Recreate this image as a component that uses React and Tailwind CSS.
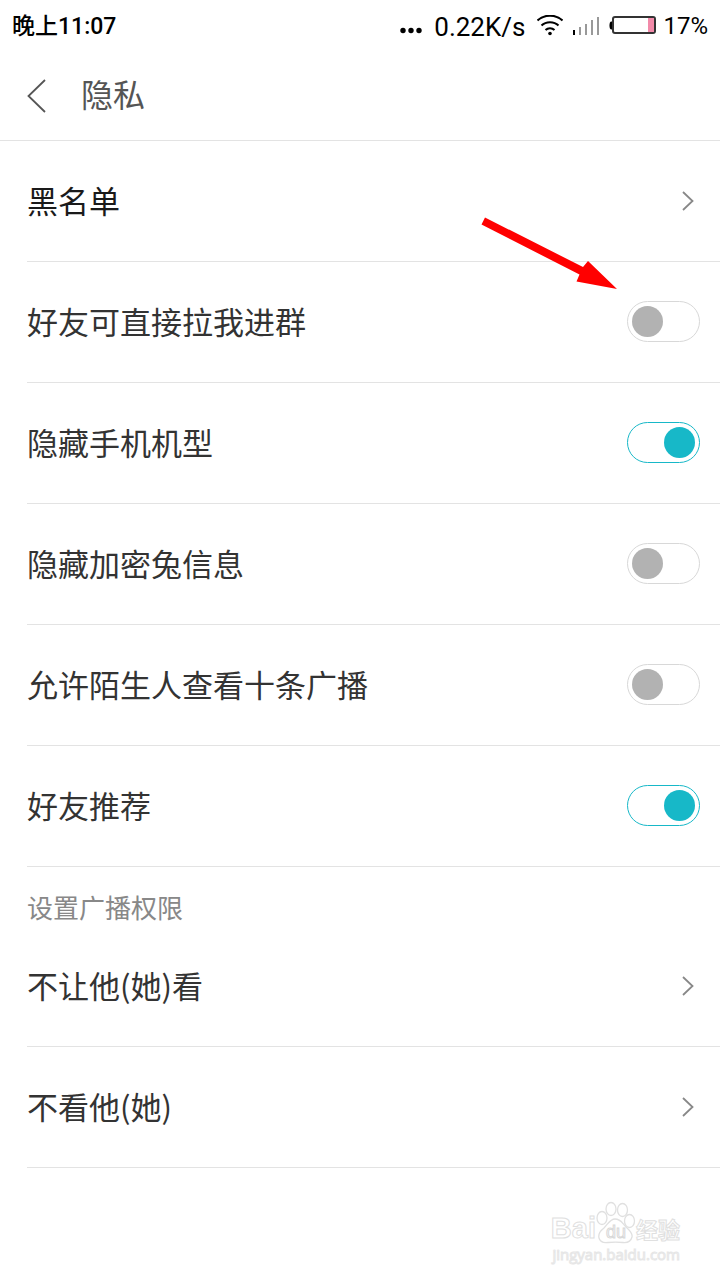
import React, { useState } from 'react';

const StatusBar = () => (
  <div className="flex h-[52px] items-center justify-between px-3 text-black">
    <span className="pt-0.5 font-['Roboto','Noto_Sans_CJK_SC',sans-serif] text-[23px] leading-8 font-medium">晚上11:07</span>
    <div className="flex items-center">
      <svg className="mr-3 mt-2 h-2 w-[22px]" viewBox="0 0 22 8" aria-hidden="true">
        <circle cx="3" cy="4.500" r="2.700" />
        <circle cx="11" cy="4.500" r="2.700" />
        <circle cx="19" cy="4.500" r="2.700" />
      </svg>
      <span className="pt-0.5 font-['Roboto','Liberation_Sans',sans-serif] text-[26px] leading-8">0.22K/s</span>
      <svg className="ml-3 h-[22px] w-[26px]" viewBox="0 0 26 22" fill="none" stroke="#000" strokeWidth="2" aria-hidden="true">
        <path d="M0.5 5.5C7 -1 19 -1 25.5 5.5" />
        <path d="M4.500 10.500C9 6 17 6 21.500 10.500" />
        <path d="M8.500 15C11 12.500 15 12.500 17.500 15" />
        <circle cx="13" cy="18.500" r="1.800" fill="#000" stroke="none" />
      </svg>
      <svg className="ml-[10px] h-5 w-[26px]" viewBox="0 0 26 20" aria-hidden="true">
        <path d="M0 14h2v5H0z" fill="#000" />
        <path d="M6 11h2v8H6zM12 8h2v11h-2zM18 4h2v15h-2zM24 1h2v18h-2z" fill="#999" />
      </svg>
      <svg className="ml-[10px] h-5 w-12" viewBox="0 0 48 20" aria-hidden="true">
        <path d="M4 5.500H2.500C1 5.500 0.500 7 0.500 9.500S1 13.500 2.500 13.500H4z" fill="#000" />
        <rect x="4" y="1" width="42" height="16" rx="2" fill="#fff" stroke="#333" strokeWidth="2" />
        <path d="M39 2h6v14h-6z" fill="#f28aa9" />
      </svg>
      <span className="ml-[6px] font-['Roboto','Liberation_Sans',sans-serif] text-[24px] leading-8">17%</span>
    </div>
  </div>
);

const ChevronIcon = () => (
  <svg className="mr-[6px] h-5 w-3" viewBox="0 0 12 20" fill="none" stroke="#888" strokeWidth="1.800" aria-hidden="true">
    <path d="M1 1l9.500 9L1 19" />
  </svg>
);

const LinkRow = ({ label, strong }) => (
  <a href="#" className="flex h-[121px] items-center justify-between border-b border-[#e3e3e3] pr-5">
    <span className={`pb-0.5 text-[31px] leading-10 ${strong ? 'text-[#1a1a1a]' : 'text-[#333]'}`}>{label}</span>
    <ChevronIcon />
  </a>
);

const SwitchRow = ({ id, label, defaultOn = false, children }) => {
  const [on, setOn] = useState(defaultOn);

  return (
    <div className="relative flex h-[121px] items-center justify-between border-b border-[#e3e3e3] pr-5 pb-px">
      <label htmlFor={id} className="pb-0.5 text-[31px] leading-10 text-[#333]">{label}</label>
      <input
        id={id}
        type="checkbox"
        role="switch"
        checked={on}
        onChange={(e) => setOn(e.target.checked)}
        className="flex h-[41px] w-[73px] shrink-0 cursor-pointer appearance-none items-center rounded-full border border-[#d8d8d8] bg-white px-1 before:block before:size-[31px] before:rounded-full before:bg-[#b2b2b2] checked:border-[#17b8c8] checked:before:translate-x-8 checked:before:bg-[#17b8c8]"
      />
      {children}
    </div>
  );
};

const PointerArrow = () => (
  <svg className="pointer-events-none absolute -top-[45px] right-[103px] h-[72px] w-[136px]" viewBox="0 0 136 72" fill="#f00" aria-hidden="true">
    <path d="M4 0.500L102 50L107 44L136 72L95.500 64.500L98.500 57.500L0.500 7.500z" />
  </svg>
);

const Watermark = () => (
  <div className="mt-8 mr-10 flex flex-col items-end text-transparent">
    <div className="flex h-11 items-end">
      <span className="font-['Liberation_Sans',sans-serif] text-[29px] leading-8 font-bold [-webkit-text-stroke:1px_#e0e0e0]">Bai</span>
      <div className="relative h-11 w-10">
        <svg className="h-11 w-10" viewBox="0 0 40 44" fill="none" stroke="#e0e0e0" strokeWidth="1.300" aria-hidden="true">
          <ellipse cx="6" cy="18" rx="5" ry="6.500" />
          <ellipse cx="15" cy="9" rx="5" ry="6.500" />
          <ellipse cx="26.500" cy="10" rx="5" ry="6.500" />
          <ellipse cx="33.500" cy="21" rx="5" ry="6.500" />
          <path d="M19 19C14 19 12 24 8 28C4 31 2 34 3 38C4 42 8 43 12 42.500C17 42 22 42 27 42.500C32 43 35 41 36 37C37 33 33 30 30 27C26 23 25 19 19 19z" />
        </svg>
        <span className="absolute inset-x-0 bottom-0.5 text-center font-['Liberation_Sans',sans-serif] text-[18px] leading-5 [-webkit-text-stroke:1px_#d8d8d8]">du</span>
      </div>
      <span className="text-[22px] leading-8 font-bold [-webkit-text-stroke:1px_#e0e0e0]">经验</span>
    </div>
    <span className="font-['Open_Sans',sans-serif] text-[15px] leading-5 [-webkit-text-stroke:1px_#e6e6e6]">jingyan.baidu.com</span>
  </div>
);

const App = () => {
  return (
    <div className="min-h-screen bg-white font-['Noto_Sans_CJK_SC',sans-serif]">
      <StatusBar />
      <header className="flex h-[89px] items-center border-b border-[#e3e3e3] pl-[27px]">
        <button type="button" aria-label="返回" className="cursor-pointer">
          <svg className="h-9 w-5" viewBox="0 0 20 36" fill="none" stroke="#555" strokeWidth="1.800" aria-hidden="true">
            <path d="M18 2L1.500 18L18 34" />
          </svg>
        </button>
        <h1 className="ml-[34px] pb-[6px] text-[32px] leading-10 text-[#555]">隐私</h1>
      </header>

      <main className="pl-[27px]">
        <LinkRow label="黑名单" strong />
        <SwitchRow id="group-invite" label="好友可直接拉我进群">
          <PointerArrow />
        </SwitchRow>
        <SwitchRow id="hide-model" label="隐藏手机机型" defaultOn />
        <SwitchRow id="hide-rabbit" label="隐藏加密兔信息" />
        <SwitchRow id="stranger-view" label="允许陌生人查看十条广播" />
        <SwitchRow id="recommend" label="好友推荐" defaultOn />
        <h2 className="h-[59px] pt-[22px] text-[26px] leading-9 text-[#888]">设置广播权限</h2>
        <LinkRow label="不让他(她)看" />
        <LinkRow label="不看他(她)" />
      </main>

      <Watermark />
    </div>
  );
};

export default App;
